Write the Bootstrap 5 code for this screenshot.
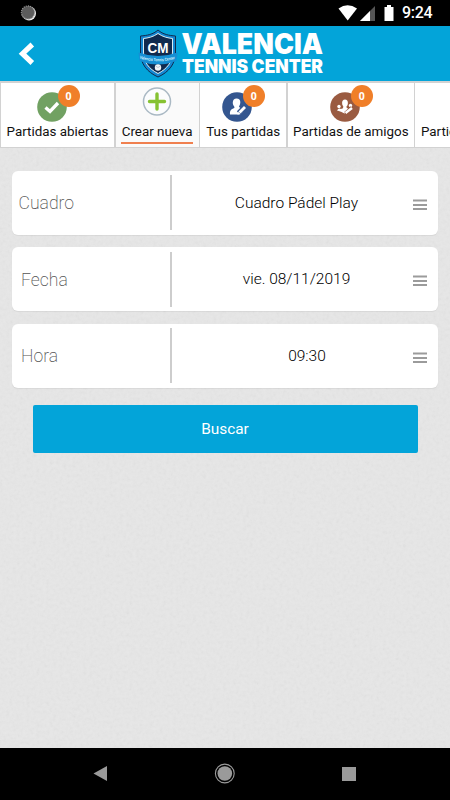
<!DOCTYPE html>
<html lang="es">
<head>
<meta charset="utf-8">
<meta name="viewport" content="width=device-width, initial-scale=1">
<title>Valencia Tennis Center</title>
<link href="https://cdn.jsdelivr.net/npm/bootstrap@5.3.0/dist/css/bootstrap.min.css" rel="stylesheet">
<style>
body{font-family:Roboto,"Liberation Sans",sans-serif;background:#000;color:#111}
.screen{width:450px;height:800px;background:#000}
.status-bar{height:26px;flex:none}
.clock{width:49px;font-size:16px;font-weight:500;line-height:28px;letter-spacing:-.3px;padding-left:1px}
.top-bar{height:55px;flex:none;background:#03a4d9}
.tab-strip{height:67px;flex:none;background:#d2d2d2;gap:1.6px;padding:2px 0 1px 1px}
.tab{background:#fff;flex:none;font-size:13.4px;line-height:20px;color:#111;text-decoration:none}
.tab-a{width:113px}.tab-b{width:83px;background:#fafafa}.tab-c{width:86px}.tab-d{width:126px}.tab-e{width:126px}
.tab-icon{width:30px;height:30px;margin-top:9px}
.tab-b .tab-icon{margin-top:3px;margin-bottom:6px}
.tab-label{display:block;white-space:nowrap;text-align:center}
.tab-e .tab-label{text-align:left;padding-left:5.5px}
.tab-a .tab-icon{margin-left:36px}
.tab-c .tab-icon{margin-left:22px}
.tab-d .tab-icon{margin-left:42.5px}
.count{left:20.5px;top:-7px;width:22px;height:22px;background:#f07f29;color:#fff;font:700 10.5px/22px "Open Sans",sans-serif;text-align:center}
.tab-line{height:2px;background:#f0804f;width:72px;margin:0 auto}
.content{background:#e7e7e7;padding:22.5px 12px 0;isolation:isolate}
.grain{z-index:-1;opacity:.1}
.field{height:64px;background:#fff;border-radius:6px;box-shadow:0 1px 1px rgba(0,0,0,.06);margin-bottom:12.5px}
.field-name{width:158px;font-weight:200;font-size:17.6px;color:#555;padding:2px 0 0 9px}
.field-name.wide{padding-left:6.5px}
.field-value{height:55px;border-left:2px solid #cdcdcd;font-weight:300;font-size:15.5px;color:#000;padding:2px 11px 0 8px}
.field-value.late{padding-left:29px}
.field-value svg{margin-top:2px}
.btn-search{width:385px;height:48px;background:#03a4d9;color:#fff;border-radius:2px;border:0;font-size:15.4px;font-weight:400;margin-top:17px;padding:9px 0 6px}
.btn-search:hover{background:#03a4d9;color:#fff}
.nav-keys{height:52px;flex:none}
</style>
<script src="https://cdn.jsdelivr.net/npm/bootstrap@5.3.0/dist/js/bootstrap.bundle.min.js"></script>
</head>
<body>
<div class="screen d-flex flex-column overflow-hidden">
  <div class="status-bar d-flex align-items-center justify-content-between">
    <svg width="40" height="26"><circle cx="29" cy="13.500" r="7" fill="#eee"/><circle cx="28" cy="12.500" r="6.600" fill="#5c5c5c" stroke="#999" stroke-width="1.200" stroke-dasharray="1.200 1"/></svg>
    <div class="d-flex align-items-center">
      <svg width="64" height="26" viewBox="337 0 64 26"><path d="M338.500 8.500Q347.500 1.800 357 8.500L347.700 20.500Z" fill="#fff"/><path d="M375 6V21H360Z" fill="#555"/><path d="M370 11V21H360Z" fill="#fff"/><path d="M384.500 7H387V5H391V7H393.500V21H384.500Z" fill="#fff"/></svg>
      <span class="clock text-white">9:24</span>
    </div>
  </div>

  <header class="top-bar">
    <svg width="450" height="55" viewBox="0 26 450 55" class="d-block">
      <path d="M32.300 44.500L22.500 53.700L32.300 63" fill="none" stroke="#fff" stroke-width="5.200"/>
      <path d="M158 30C163 34.500 169 35.500 175.500 36V52C175.500 64 169 72 158 77C147 72 140.500 64 140.500 52V36C147 35.500 153 34.500 158 30Z" fill="#1387d2" stroke="#102a4e" stroke-width="1"/>
      <path d="M158 33.500C163 37 168 38 172.500 38.500V52C172.500 62 167 69 158 73.500C149 69 143.500 62 143.500 52V38.500C148 38 153 37 158 33.500Z" fill="#102a4e" stroke="#d9edf5" stroke-width="1"/>
      <path d="M138.500 52.500Q158 59.500 177.500 52.500L176.500 61Q158 68 139.500 61Z" fill="#168fd4"/>
      <text x="158" y="53" text-anchor="middle" font-family="Liberation Sans,sans-serif" font-weight="700" font-size="14.500" fill="#fff" textLength="21" lengthAdjust="spacingAndGlyphs">CM</text>
      <path id="ribbon" d="M139.500 58.500Q158 64 177 58.500" fill="none"/>
      <text font-family="Liberation Sans,sans-serif" font-weight="700" font-size="4.300" fill="#d9f1fb"><textPath href="#ribbon" textLength="36" lengthAdjust="spacingAndGlyphs">Valencia Tennis Center</textPath></text>
      <circle cx="158" cy="67.500" r="3.200" fill="#f1f4f7"/><path d="M155.500 66Q158 69 160.500 66" fill="none" stroke="#9aa8b8" stroke-width=".6"/>
      <g font-family="Inter,sans-serif" font-weight="900" fill="#fff">
        <text x="181.500" y="54.300" font-size="28" textLength="141.500" lengthAdjust="spacingAndGlyphs">VALENCIA</text>
        <text x="182" y="73.300" font-size="18.200" textLength="141" lengthAdjust="spacingAndGlyphs">TENNIS CENTER</text>
      </g>
    </svg>
  </header>

  <nav class="tab-strip d-flex overflow-hidden">
    <a class="tab tab-a d-flex flex-column" href="#">
      <div class="tab-icon position-relative"><svg class="d-block" width="30" height="30"><circle cx="15" cy="15" r="14.800" fill="#71a162"/><path d="M8.500 15.500L13 19.500L21 11" fill="none" stroke="#fff" stroke-width="3.300"/></svg><span class="count position-absolute rounded-circle">0</span></div>
      <span class="tab-label">Partidas abiertas</span>
    </a>
    <a class="tab tab-b d-flex flex-column" href="#">
      <div class="tab-icon mx-auto"><svg class="d-block" width="30" height="30"><circle cx="15" cy="15.500" r="13.500" fill="#fbfcfd" stroke="#aab9c4" stroke-width="1.500"/><path d="M15 8V23M7.500 15.500H22.500" stroke="#86c232" stroke-width="3.400" stroke-linecap="round"/></svg></div>
      <span class="tab-label">Crear nueva</span>
      <div class="tab-line"></div>
    </a>
    <a class="tab tab-c d-flex flex-column" href="#">
      <div class="tab-icon position-relative"><svg class="d-block" width="30" height="30"><circle cx="15" cy="15" r="14.800" fill="#34568f"/><path d="M14.500 6.500C17 6.500 18.500 8 18.300 10.500C18.200 12.500 17.500 13.500 17 14.500C17.300 16 21 16.500 21 19.500L18 22.500H8C7.700 18.500 9 17.200 12.300 16C12.500 15.500 12.500 15 12 14.300C11 13 10.700 11.500 10.800 10.200C10.900 8 12.300 6.500 14.500 6.500Z" fill="#fff"/><path d="M16.500 21L23 14.500" stroke="#34568f" stroke-width="4.600"/><path d="M17.500 20.500L23 15" stroke="#fff" stroke-width="2.800"/><path d="M15.500 22.800L16.300 19.800L18.400 21.800Z" fill="#fff"/></svg><span class="count position-absolute rounded-circle">0</span></div>
      <span class="tab-label">Tus partidas</span>
    </a>
    <a class="tab tab-d d-flex flex-column" href="#">
      <div class="tab-icon position-relative"><svg class="d-block" width="30" height="30"><circle cx="15" cy="15" r="14.800" fill="#9a5b41"/><g fill="#fff"><ellipse cx="15" cy="11" rx="2.900" ry="3.500"/><path d="M13.500 13H16.500V15.500L19 17.500L14.500 21.500L9.500 19L9.500 17.500L13 16.200Z"/><circle cx="9" cy="14.500" r="1.700"/><circle cx="20.500" cy="13.500" r="1.700"/><path d="M7 18.500Q8.500 15.500 11 17L10.500 19.500Z"/></g><path d="M15.500 21.500L22 15.800" stroke="#9a5b41" stroke-width="3.800"/><path d="M15.500 21L22 16" stroke="#fff" stroke-width="2.400"/></svg><span class="count position-absolute rounded-circle">0</span></div>
      <span class="tab-label">Partidas de amigos</span>
    </a>
    <a class="tab tab-e d-flex flex-column" href="#">
      <div class="tab-icon"></div>
      <span class="tab-label">Partidas</span>
    </a>
  </nav>

  <main class="content flex-grow-1 position-relative">
    <svg class="grain position-absolute top-0 start-0 w-100 h-100"><filter id="noise"><feTurbulence type="fractalNoise" baseFrequency=".3" numOctaves="3" seed="4"/><feColorMatrix type="saturate" values="0"/></filter><rect width="100%" height="100%" filter="url(#noise)"/></svg>
    <div class="field d-flex align-items-center">
      <div class="field-name wide">Cuadro</div>
      <div class="field-value flex-grow-1 d-flex align-items-center"><span class="flex-grow-1 text-center">Cuadro Pádel Play</span><svg width="14" height="12"><path d="M0 1.500H14M0 6H14M0 10H14" stroke="#9b9b9b" stroke-width="2" fill="none"/></svg></div>
    </div>
    <div class="field d-flex align-items-center">
      <div class="field-name">Fecha</div>
      <div class="field-value flex-grow-1 d-flex align-items-center"><span class="flex-grow-1 text-center">vie. 08/11/2019</span><svg width="14" height="12"><path d="M0 1.500H14M0 6H14M0 10H14" stroke="#9b9b9b" stroke-width="2" fill="none"/></svg></div>
    </div>
    <div class="field d-flex align-items-center">
      <div class="field-name">Hora</div>
      <div class="field-value late flex-grow-1 d-flex align-items-center"><span class="flex-grow-1 text-center">09:30</span><svg width="14" height="12"><path d="M0 1.500H14M0 6H14M0 10H14" stroke="#9b9b9b" stroke-width="2" fill="none"/></svg></div>
    </div>
    <button type="button" class="btn btn-search d-block mx-auto">Buscar</button>
  </main>

  <footer class="nav-keys">
    <svg class="d-block" width="450" height="52" viewBox="0 748 450 52"><g fill="#9a9a9a"><path d="M93.500 773.500L107 766V781Z"/><circle cx="224.800" cy="773.500" r="7.300"/><rect x="342" y="767" width="14" height="14"/></g><circle cx="224.800" cy="773.500" r="9.400" fill="none" stroke="#9a9a9a" stroke-width="1.100"/></svg>
  </footer>
</div>
</body>
</html>
